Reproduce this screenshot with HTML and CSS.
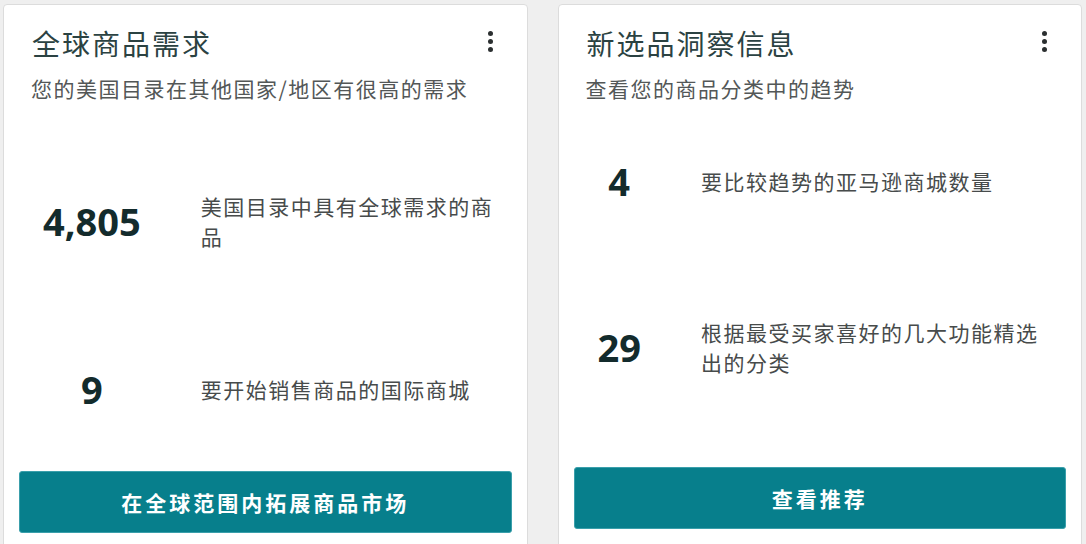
FILE: index.html
```html
<!DOCTYPE html>
<html lang="zh-CN">
<head>
<meta charset="utf-8">
<title>Cards</title>
<link rel="stylesheet" href="styles.css">
</head>
<body>
<main class="board">
  <section class="card card--global">
    <header class="card-head">
      <h2 class="card-title">全球商品需求</h2>
      <span class="kebab" aria-label="更多"><i></i><i></i><i></i></span>
    </header>
    <p class="card-sub">您的美国目录在其他国家/地区有很高的需求</p>
    <div class="stats">
      <div class="stat-num">4,805</div>
      <div class="stat-desc">美国目录中具有全球需求的商品</div>
      <div class="stat-num">9</div>
      <div class="stat-desc">要开始销售商品的国际商城</div>
    </div>
    <button class="card-btn" type="button">在全球范围内拓展商品市场</button>
  </section>
  <section class="card card--insight">
    <header class="card-head">
      <h2 class="card-title">新选品洞察信息</h2>
      <span class="kebab" aria-label="更多"><i></i><i></i><i></i></span>
    </header>
    <p class="card-sub">查看您的商品分类中的趋势</p>
    <div class="stats">
      <div class="stat-num">4</div>
      <div class="stat-desc">要比较趋势的亚马逊商城数量</div>
      <div class="stat-num">29</div>
      <div class="stat-desc">根据最受买家喜好的几大功能精选出的分类</div>
    </div>
    <button class="card-btn" type="button">查看推荐</button>
  </section>
</main>
</body>
</html>
```
FILE: styles.css
```css
html, body {
  margin: 0;
  padding: 0;
}
body {
  width: 1086px;
  height: 544px;
  overflow: hidden;
  background: #efefef;
  font-family: "Noto Sans CJK SC", "Open Sans", sans-serif;
}
.board {
  display: grid;
  grid-template-columns: 1fr 1fr;
  column-gap: 30px;
  padding: 4px 4px 0 3px;
}
.card {
  background: #fff;
  border: 1px solid #dcdcdc;
  border-radius: 4px;
  height: 600px;
  padding: 18px 15px 0;
  box-sizing: border-box;
  display: flex;
  flex-direction: column;
}
.card-head {
  display: flex;
  justify-content: space-between;
  align-items: center;
  padding: 0 19px 0 13px;
}
.card-title {
  margin: 0;
  font-size: 28px;
  letter-spacing: 2px;
  line-height: 40px;
  font-weight: 400;
  color: #2b4242;
}
.kebab {
  display: flex;
  flex-direction: column;
  gap: 3px;
  margin-top: -4px;
}
.kebab i {
  display: block;
  width: 5px;
  height: 5px;
  border-radius: 50%;
  background: #2b2f30;
}
.card-sub {
  margin: 10px 0 0;
  padding: 0 12px;
  font-size: 21px;
  letter-spacing: 1.5px;
  line-height: 30px;
  color: #535757;
}
.stats {
  display: grid;
  grid-template-columns: auto 1fr;
  column-gap: 48px;
  align-items: center;
  padding: 0 12px;
}
.card--global .stats {
  padding-top: 88px;
  row-gap: 123px;
  margin-bottom: 67px;
}
.card--insight .stats {
  padding-top: 63px;
  row-gap: 121px;
  margin-bottom: 90px;
}
.stat-num {
  font-family: "Open Sans", sans-serif;
  font-weight: 700;
  font-size: 38px;
  line-height: 30px;
  color: #132b2c;
  text-align: center;
  padding: 0 12px;
}
.stat-desc {
  font-size: 21px;
  letter-spacing: 1.5px;
  line-height: 30px;
  color: #474b4b;
}
.card-btn {
  display: block;
  width: 100%;
  height: 62px;
  border: 1px solid #3a9fab;
  border-radius: 3px;
  background: #077f8c;
  color: #fff;
  font-family: "Noto Sans CJK SC", sans-serif;
  font-size: 21px;
  font-weight: 700;
  letter-spacing: 3px;
  cursor: pointer;
}
```
